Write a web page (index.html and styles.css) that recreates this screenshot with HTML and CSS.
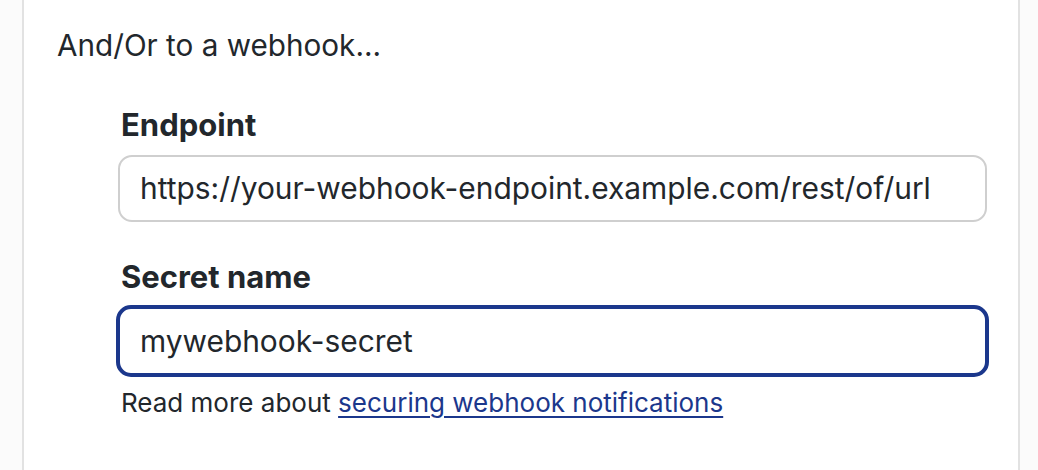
FILE: index.html
```html
<!DOCTYPE html>
<html>
<head>
<meta charset="utf-8">
<link rel="stylesheet" href="styles.css">
</head>
<body>
<div class="page">
  <section class="panel">
    <h2 class="title">And/Or to a webhook...</h2>
    <div class="fields">
      <div class="field">
        <label class="label">Endpoint</label>
        <div class="input">https://your-webhook-endpoint.example.com/rest/of/url</div>
      </div>
      <div class="field">
        <label class="label">Secret name</label>
        <div class="input focused">mywebhook-secret</div>
        <p class="help">Read more about <a href="#">securing webhook notifications</a></p>
      </div>
    </div>
  </section>
</div>
</body>
</html>
```
FILE: styles.css
```css
html, body {
  margin: 0;
  padding: 0;
  background: #ffffff;
}
body {
  font-family: Inter, "Noto Sans", sans-serif;
  color: #22272c;
}
.page {
  width: 1038px;
  height: 470px;
  overflow: hidden;
  background: #fbfbfb;
}
.panel {
  margin-left: 22px;
  width: 994px;
  height: 470px;
  background: #ffffff;
  border-left: 2px solid #e2e2e2;
  border-right: 2px solid #e2e2e2;
  box-sizing: content-box;
  padding-top: 26px;
}
.title {
  margin: 0 0 0 33px;
  font-size: 29.7px;
  font-weight: 400;
  line-height: 38px;
}
.fields {
  margin: 43px 0 0 94px;
  width: 869px;
  display: flex;
  flex-direction: column;
  gap: 37px;
}
.field {
  display: flex;
  flex-direction: column;
}
.label {
  margin-left: 3px;
  font-size: 31px;
  font-weight: 700;
  line-height: 36px;
  margin-bottom: 12px;
}
.input {
  height: 63px;
  box-sizing: content-box;
  border: 2px solid #cfcfcf;
  border-radius: 14px;
  padding: 0 20px;
  font-size: 29.9px;
  line-height: 63px;
  white-space: nowrap;
}
.input.focused {
  border: 4px solid #1b378c;
  margin: -2px -2px 0;
  height: 64px;
  line-height: 64px;
  border-radius: 15px;
}
.help {
  margin: 9px 0 0 3px;
  font-size: 26px;
  line-height: 34px;
}
.help a {
  color: #1b378c;
  text-decoration: underline;
  text-underline-offset: 4px;
}
```
